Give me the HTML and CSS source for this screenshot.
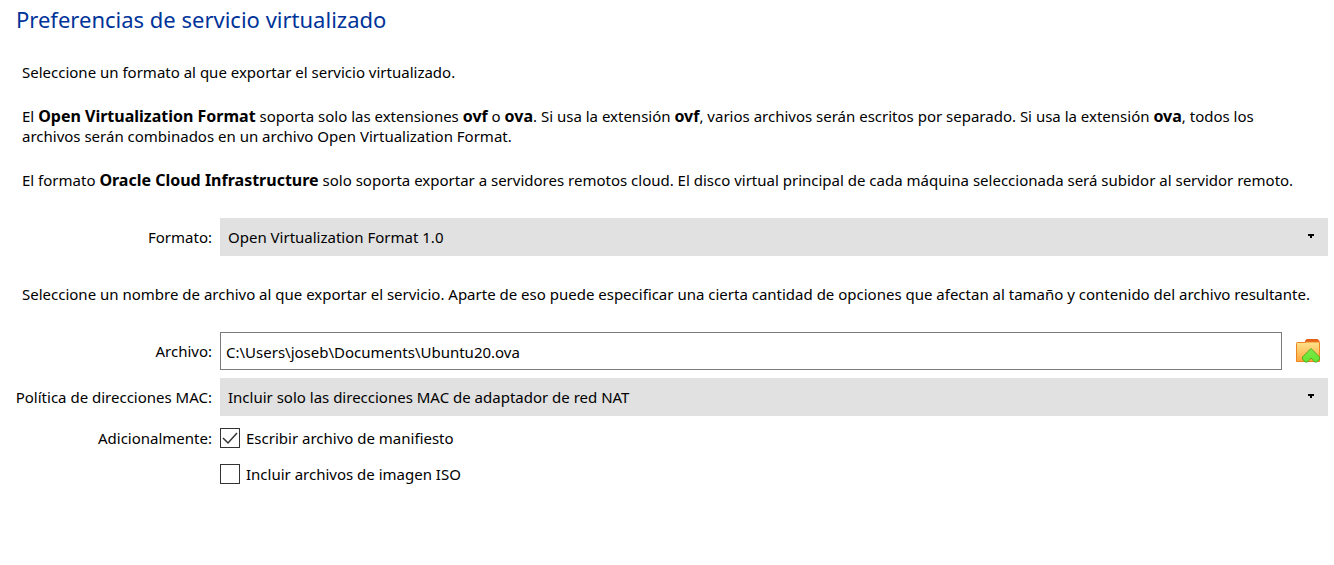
FILE: index.html
```
<!DOCTYPE html>
<html lang="es">
<head>
<meta charset="utf-8">
<meta name="viewport" content="width=device-width, initial-scale=1">
<title>Preferencias de servicio virtualizado</title>
<link rel="stylesheet" href="styles.css">
</head>
<body>
<main class="page">
  <h1 class="title">Preferencias de servicio virtualizado</h1>
  <form class="form">
    <div class="intro">
      <p>Seleccione un formato al que exportar el servicio virtualizado.</p>
      <p>El <b>Open Virtualization Format</b> soporta solo las extensiones <b>ovf</b> o <b>ova</b>. Si usa la extensión <b>ovf</b>, varios archivos serán escritos por separado. Si usa la extensión <b>ova</b>, todos los archivos serán combinados en un archivo Open Virtualization Format.</p>
      <p>El formato <b>Oracle Cloud Infrastructure</b> solo soporta exportar a servidores remotos cloud. El disco virtual principal de cada máquina seleccionada será subidor al servidor remoto.</p>
    </div>

    <div class="row">
      <label class="label" for="format">Formato:</label>
      <div class="combo">
        <select class="select" id="format"><option>Open Virtualization Format 1.0</option></select>
        <svg class="arrow" viewBox="0 0 6 4" shape-rendering="crispEdges" aria-hidden="true"><path d="M0 0h6v2H4v2H2V2H0z"/></svg>
      </div>
    </div>

    <div class="intro">
      <p>Seleccione un nombre de archivo al que exportar el servicio. Aparte de eso puede especificar una cierta cantidad de opciones que afectan al tamaño y contenido del archivo resultante.</p>
    </div>

    <div class="fields">
      <div class="row">
        <label class="label" for="file">Archivo:</label>
        <div class="file">
          <input class="input" id="file" type="text" value="C:\Users\joseb\Documents\Ubuntu20.ova">
          <button class="browse" type="button" aria-label="Elegir archivo">
            <svg class="folder" viewBox="0 0 24 24" aria-hidden="true">
              <defs>
                <linearGradient id="front" x1="0" y1="0" x2="0" y2="1"><stop offset="0" stop-color="#ffe38c"/><stop offset="1" stop-color="#ffa63c"/></linearGradient>
                <linearGradient id="up" x1="0" y1="0" x2="0" y2="1"><stop offset="0" stop-color="#7fe84a"/><stop offset="1" stop-color="#62e62e"/></linearGradient>
              </defs>
              <path d="M9 4V2l1.500-2h11L23.500 2v8H9z" fill="#e5601a"/>
              <path d="M.5 4.500Q.5 3.500 1.500 3.500H9l1.500-.5h12q1 0 1 1v18.500H.5z" fill="url(#front)" stroke="#ee8420"/>
              <path d="M15 9.500l8.500 8.500v2l-2.500 3h-2.500L15 19l-3.500 4H9l-2.500-3v-2z" fill="url(#up)" stroke="#4fae22" stroke-linejoin="round"/>
            </svg>
          </button>
        </div>
      </div>
      <div class="row">
        <label class="label" for="mac">Política de direcciones MAC:</label>
        <div class="combo">
          <select class="select" id="mac"><option>Incluir solo las direcciones MAC de adaptador de red NAT</option></select>
          <svg class="arrow" viewBox="0 0 6 4" shape-rendering="crispEdges" aria-hidden="true"><path d="M0 0h6v2H4v2H2V2H0z"/></svg>
        </div>
      </div>
      <div class="row extras" role="group" aria-labelledby="extras">
        <span class="label" id="extras">Adicionalmente:</span>
        <div class="checks">
          <label class="check">
            <span class="tick"><input class="box" type="checkbox" checked><svg class="mark" viewBox="0 0 20 20" aria-hidden="true"><path d="M3 10l5 5 9-10"/></svg></span>
            Escribir archivo de manifiesto
          </label>
          <label class="check">
            <span class="tick"><input class="box" type="checkbox"><svg class="mark" viewBox="0 0 20 20" aria-hidden="true"><path d="M3 10l5 5 9-10"/></svg></span>
            Incluir archivos de imagen ISO
          </label>
        </div>
      </div>
    </div>
  </form>
</main>
</body>
</html>
```
FILE: styles.css
```
* { box-sizing: border-box; }

body {
  margin: 0;
  background: #fff;
  color: #000;
  font: 15px/20px "Noto Sans", "Open Sans", sans-serif;
}

.page { padding: 4px 6px 16px 0; }

.title {
  margin: 0 0 28px;
  padding-left: 16px;
  color: #003399;
  font-size: 22px;
  font-weight: 400;
  line-height: 30px;
}

.form {
  display: flex;
  flex-direction: column;
  gap: 28px;
}

.intro {
  display: flex;
  flex-direction: column;
  gap: 24px;
  padding: 0 14px 0 22px;
}

.intro p { margin: 0; }

.intro b {
  font-size: 16px;
  line-height: 1;
}

.fields {
  display: flex;
  flex-direction: column;
  gap: 8px;
}

.row {
  display: grid;
  grid-template-columns: 212px minmax(0, 1fr);
  column-gap: 8px;
  align-items: center;
}

.label { text-align: right; }

.combo {
  display: grid;
  align-items: center;
}

.combo > * { grid-area: 1 / 1; }

.select {
  width: 100%;
  height: 38px;
  padding: 0 32px 0 8px;
  border: 0;
  border-radius: 0;
  appearance: none;
  background: #e1e1e1;
  color: inherit;
  font: inherit;
}

.arrow {
  width: 6px;
  height: 4px;
  margin: 0 14px 2px 0;
  justify-self: end;
  pointer-events: none;
}

.file {
  display: flex;
  align-items: center;
  gap: 6px;
}

.input {
  flex: 1;
  min-width: 0;
  height: 38px;
  padding: 1px 5px 0;
  border: 1px solid #7a7a7a;
  border-radius: 0;
  background: #fff;
  color: inherit;
  font: inherit;
}

.browse {
  display: grid;
  place-items: center;
  width: 40px;
  height: 38px;
  padding: 0;
  border: 0;
  background: none;
}

.folder {
  width: 24px;
  height: 24px;
}

.extras {
  align-items: start;
  padding-top: 4px;
}

.checks {
  display: flex;
  flex-direction: column;
  gap: 16px;
}

.check {
  display: flex;
  align-items: center;
  gap: 6px;
}

.tick {
  display: grid;
  width: 20px;
  height: 20px;
}

.tick > * { grid-area: 1 / 1; }

.box {
  width: 20px;
  height: 20px;
  margin: 0;
  border: 1px solid #333;
  appearance: none;
  background: #fff;
}

.mark {
  visibility: hidden;
  fill: none;
  stroke: #333;
  stroke-width: 1.500;
  pointer-events: none;
}

.box:checked + .mark { visibility: visible; }
```
